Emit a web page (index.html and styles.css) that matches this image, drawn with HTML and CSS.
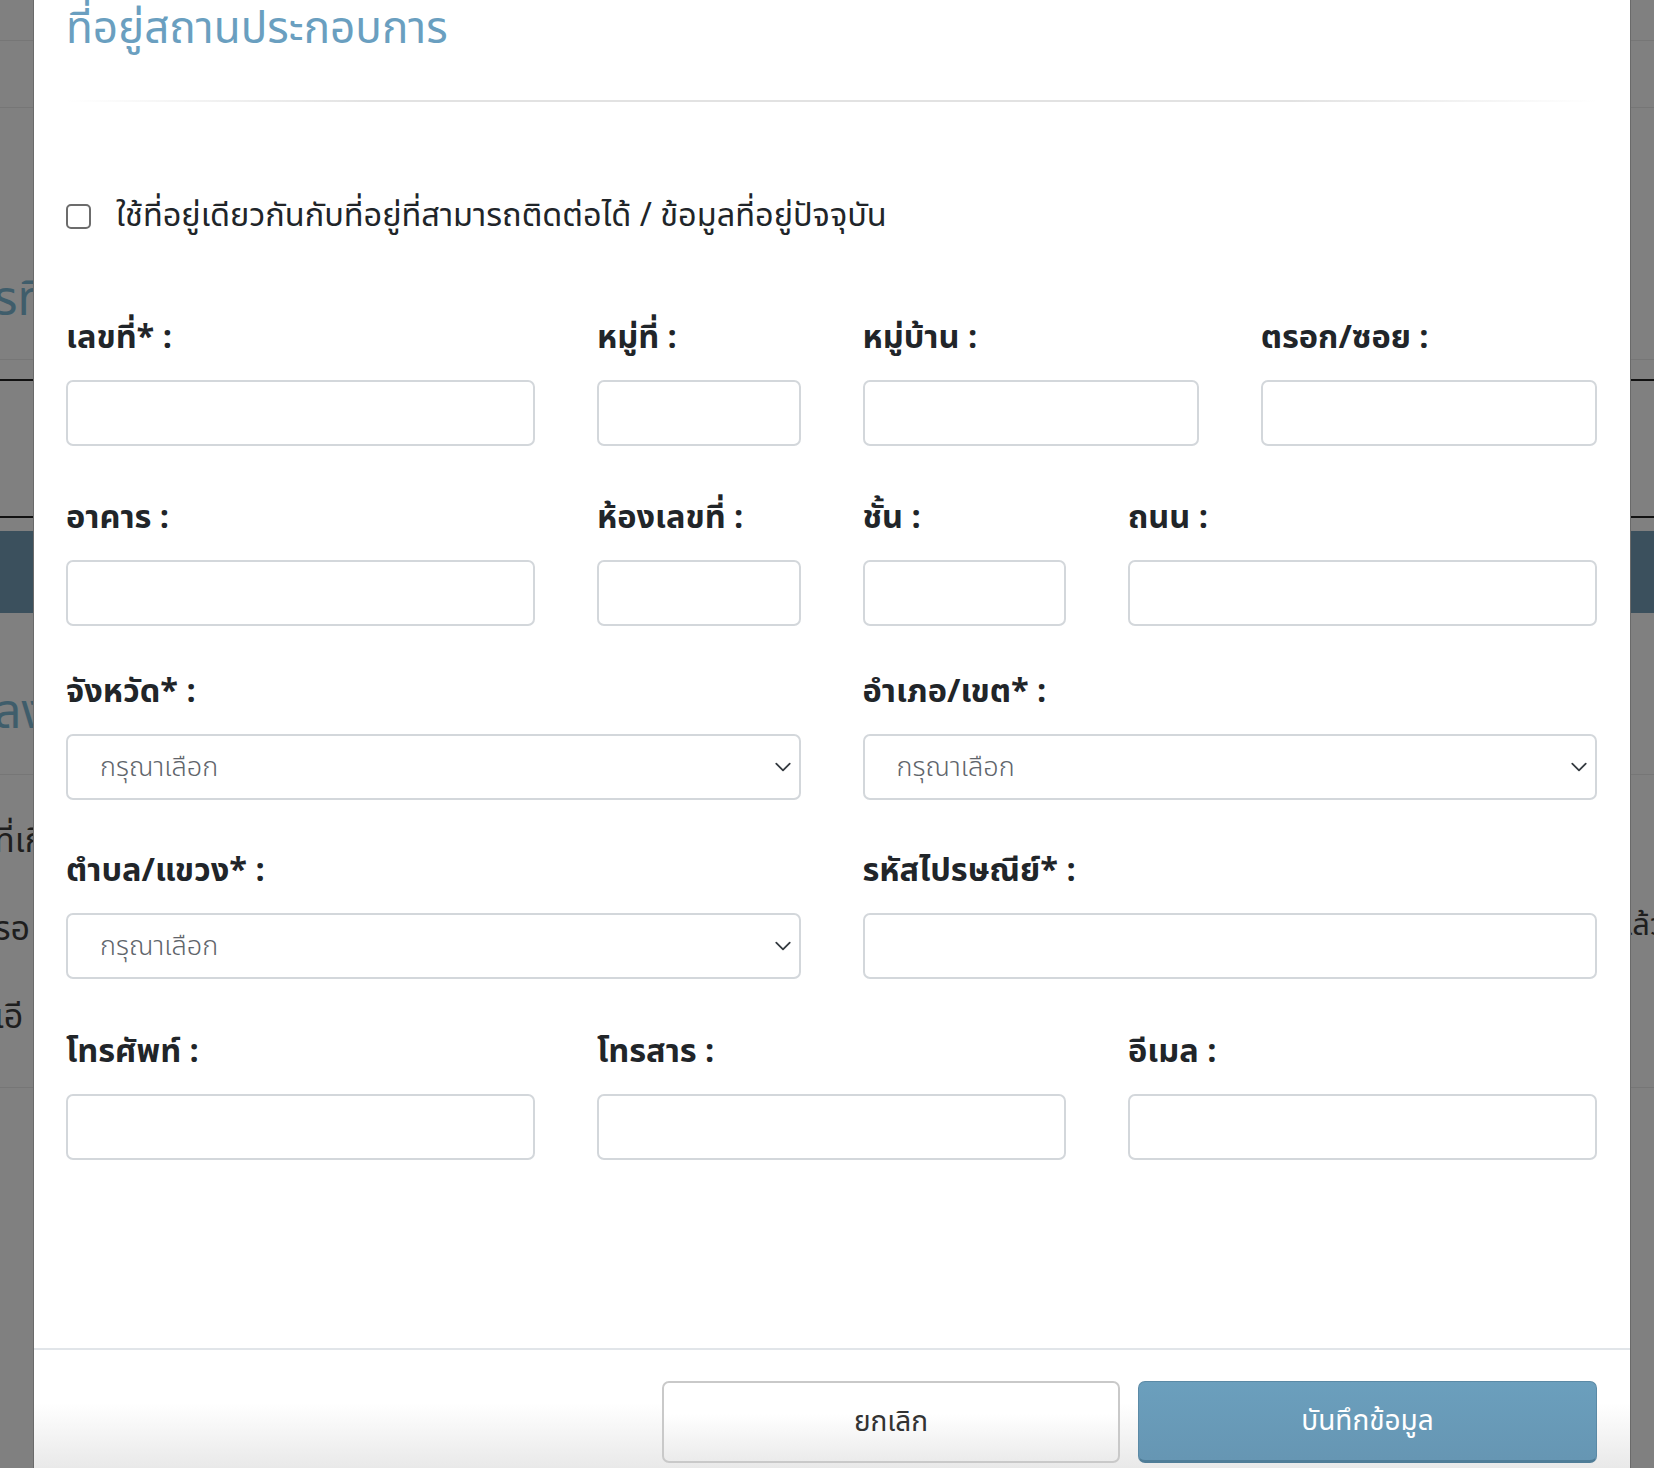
FILE: index.html
```html
<!DOCTYPE html>
<html lang="th">
<head>
<meta charset="utf-8">
<title>ที่อยู่สถานประกอบการ</title>
<link rel="stylesheet" href="styles.css">
</head>
<body>
<div class="page">
  <div class="pg-row pg-r1"></div>
  <div class="pg-row pg-r2"></div>
  <div class="pg-row pg-r3"><span class="pg-clip"><span class="pg-head">รที่</span></span></div>
  <div class="pg-row pg-r4"></div>
  <div class="pg-row pg-r5"></div>
  <div class="pg-band"></div>
  <div class="pg-row pg-r6"><span class="pg-clip"><span class="pg-head">ลง</span></span></div>
  <div class="pg-row pg-r7">
    <span class="pg-clip"><span class="pg-text">ที่เกิ</span></span>
    <span class="pg-clip"><span class="pg-text">รอ</span></span>
    <span class="pg-clip"><span class="pg-text">เอี</span></span>
    <span class="pg-clip pg-right"><span class="pg-text">แล้ว</span></span>
  </div>
</div>

<div class="modal">
  <div class="modal-body">
    <h2 class="modal-title">ที่อยู่สถานประกอบการ</h2>
    <div class="title-rule"></div>

    <label class="same-addr">
      <span class="check-box"></span>
      <span>ใช้ที่อยู่เดียวกันกับที่อยู่ที่สามารถติดต่อได้ / ข้อมูลที่อยู่ปัจจุบัน</span>
    </label>

    <div class="form-grid">
      <div class="field span4 h180"><label class="lbl">เลขที่* :</label><div class="input"></div></div>
      <div class="field span2 h180"><label class="lbl">หมู่ที่ :</label><div class="input"></div></div>
      <div class="field span3 h180"><label class="lbl">หมู่บ้าน :</label><div class="input"></div></div>
      <div class="field span3 h180"><label class="lbl">ตรอก/ซอย :</label><div class="input"></div></div>

      <div class="field span4 h174"><label class="lbl">อาคาร :</label><div class="input"></div></div>
      <div class="field span2 h174"><label class="lbl">ห้องเลขที่ :</label><div class="input"></div></div>
      <div class="field span2 h174"><label class="lbl">ชั้น :</label><div class="input"></div></div>
      <div class="field span4 h174"><label class="lbl">ถนน :</label><div class="input"></div></div>

      <div class="field span6 h179"><label class="lbl">จังหวัด* :</label>
        <div class="input select"><span class="placeholder">กรุณาเลือก</span>
          <svg class="chev" viewBox="0 0 16 16" width="18" height="18"><path d="M2 5l6 6 6-6" fill="none" stroke="#343a40" stroke-width="1.6" stroke-linecap="round" stroke-linejoin="round"/></svg>
        </div>
      </div>
      <div class="field span6 h179"><label class="lbl">อำเภอ/เขต* :</label>
        <div class="input select"><span class="placeholder">กรุณาเลือก</span>
          <svg class="chev" viewBox="0 0 16 16" width="18" height="18"><path d="M2 5l6 6 6-6" fill="none" stroke="#343a40" stroke-width="1.6" stroke-linecap="round" stroke-linejoin="round"/></svg>
        </div>
      </div>

      <div class="field span6 h181"><label class="lbl">ตำบล/แขวง* :</label>
        <div class="input select"><span class="placeholder">กรุณาเลือก</span>
          <svg class="chev" viewBox="0 0 16 16" width="18" height="18"><path d="M2 5l6 6 6-6" fill="none" stroke="#343a40" stroke-width="1.6" stroke-linecap="round" stroke-linejoin="round"/></svg>
        </div>
      </div>
      <div class="field span6 h181"><label class="lbl">รหัสไปรษณีย์* :</label><div class="input"></div></div>

      <div class="field span4 h180"><label class="lbl">โทรศัพท์ :</label><div class="input"></div></div>
      <div class="field span4 h180"><label class="lbl">โทรสาร :</label><div class="input"></div></div>
      <div class="field span4 h180"><label class="lbl">อีเมล :</label><div class="input"></div></div>
    </div>
  </div>

  <div class="modal-footer">
    <button class="btn btn-cancel">ยกเลิก</button>
    <button class="btn btn-save">บันทึกข้อมูล</button>
  </div>
</div>
</body>
</html>
```

FILE: styles.css
```css
* { box-sizing: border-box; }
html, body { margin: 0; padding: 0; }
body {
  width: 1654px;
  height: 1468px;
  overflow: hidden;
  position: relative;
  background: #808080;
  font-family: "Noto Sans Thai", "Noto Sans", "DejaVu Sans", sans-serif;
  color: #212529;
}

/* page behind the backdrop */
.page { display: flex; flex-direction: column; }
.pg-row { border-bottom: 1px solid #767676; position: relative; }
.pg-r1 { height: 41px; }
.pg-r2 { height: 67px; }
.pg-r3 { height: 252px; display: flex; align-items: flex-end; padding-bottom: 34px; }
.pg-r4 { height: 21px; border-bottom: 2px solid #111; }
.pg-r5 { height: 137px; border-bottom: 2px solid #111; }
.pg-band { height: 82px; margin-top: 13px; background: #3b505d; }
.pg-r6 { height: 162px; display: flex; align-items: flex-end; padding-bottom: 36px; }
.pg-r7 { height: 313px; display: flex; flex-direction: column; gap: 40px; padding-top: 36px; }
.pg-clip { display: block; width: 33px; overflow: hidden; white-space: nowrap; padding-top: 14px; }
.pg-head { font-size: 48px; color: #3f5d6b; margin-left: -6px; line-height: 1; display: inline-block; }
.pg-text { font-size: 34px; color: #1e1e1e; line-height: 1; margin-left: -6px; display: inline-block; }
.pg-right { position: absolute; right: 0; top: 121px; width: 23px; }
.pg-right .pg-text { margin-left: -16px; font-size: 31px; }

/* modal */
.modal {
  position: absolute;
  left: 33px;
  top: 0;
  width: 1598px;
  height: 1468px;
  background: #fff;
  border-left: 1px solid #6a6a6a;
  border-right: 1px solid #6a6a6a;
  display: flex;
  flex-direction: column;
}
.modal-body {
  flex: 1;
  padding: 0 33px 0 32px;
}
.modal-title {
  margin: 0;
  font-size: 44px;
  font-weight: 400;
  color: #6a9fc0;
  line-height: 60px;
  height: 56px;
}
.title-rule {
  margin: 44px 0 0;
  height: 2px;
  background: linear-gradient(to right, rgba(225,225,225,0), #e2e2e2 20%, #e2e2e2 80%, rgba(225,225,225,0));
}

.same-addr {
  display: flex;
  align-items: center;
  gap: 25px;
  margin-top: 100px;
  height: 28px;
  font-size: 32.5px;
  color: #212529;
  white-space: nowrap;
}
.check-box {
  width: 25px;
  height: 25px;
  border: 2px solid #6c6c6c;
  border-radius: 5px;
  flex: none;
}

.form-grid {
  display: grid;
  grid-template-columns: repeat(12, 1fr);
  column-gap: 62px;
  row-gap: 0;
  margin-top: 78px;
}
.span2 { grid-column: span 2; }
.span3 { grid-column: span 3; }
.span4 { grid-column: span 4; }
.span6 { grid-column: span 6; }

.field { display: flex; flex-direction: column; }
.h180 { height: 180px; }
.h174 { height: 174px; }
.h179 { height: 179px; }
.h181 { height: 181px; }
.lbl {
  margin-top: 11px;
  font-size: 32.5px;
  font-weight: 700;
  line-height: 40px;
  height: 40px;
  color: #212529;
  white-space: nowrap;
}
.input {
  margin-top: 21px;
  height: 66px;
  border: 2px solid #d3d7db;
  border-radius: 7px;
  background: #fff;
  display: flex;
  align-items: center;
}
.select { padding: 0 7px 0 32px; justify-content: space-between; }
.placeholder { font-size: 27px; color: #5f656b; font-weight: 300; }
.chev { flex: none; }

.modal-footer {
  height: 120px;
  border-top: 2px solid #e1e5e9;
  display: flex;
  justify-content: flex-end;
  align-items: flex-start;
  gap: 18px;
  padding: 31px 33px 0 0;
  background: linear-gradient(to bottom, #fff 0%, #fff 45%, #e9e9e9 100%);
}
.btn {
  font-family: inherit;
  width: 458px;
  height: 82px;
  border-radius: 7px;
  font-size: 28px;
  cursor: pointer;
}
.btn-cancel {
  background: linear-gradient(to bottom, #fff 40%, #ebebeb 100%);
  border: 2px solid #c9c9c9;
  color: #333;
}
.btn-save {
  width: 459px;
  background: linear-gradient(to bottom, #6b9fbd 0%, #6696b3 100%);
  border: 1px solid #5b8aa6;
  border-bottom: 3px solid #4f7d98;
  color: #fff;
}
```
